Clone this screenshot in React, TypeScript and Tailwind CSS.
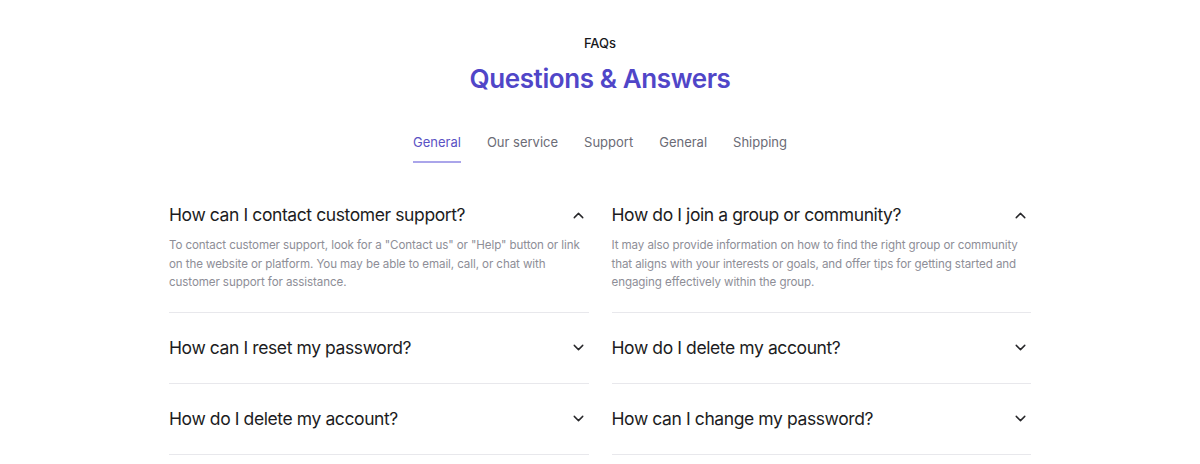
import { ChevronDown, ChevronUp } from "lucide-react";

const tabs = ["General", "Our service", "Support", "General", "Shipping"];

type Item = { q: string; a?: string };

const left: Item[] = [
  {
    q: "How can I contact customer support?",
    a: 'To contact customer support, look for a "Contact us" or "Help" button or link on the website or platform. You may be able to email, call, or chat with customer support for assistance.'
  },
  { q: "How can I reset my password?" },
  { q: "How do I delete my account?" }
];

const right: Item[] = [
  {
    q: "How do I join a group or community?",
    a: "It may also provide information on how to find the right group or community that aligns with your interests or goals, and offer tips for getting started and engaging effectively within the group."
  },
  { q: "How do I delete my account?" },
  { q: "How can I change my password?" }
];

function FaqItem({ item }: { item: Item }) {
  const open = !!item.a;
  return (
    <div className={`border-b border-[#e8e8ec] ${open ? "pb-[20px]" : "py-[23px]"}`}>
      <div className="flex items-center justify-between">
        <h3 className="text-[17.5px] leading-6 tracking-[-0.4px] text-[#1c1c22]">{item.q}</h3>
        {open ? (
          <ChevronUp className="mr-[2px] h-[17px] w-[17px] text-[#27272a]" strokeWidth={2} />
        ) : (
          <ChevronDown className="mr-[2px] h-[17px] w-[17px] text-[#27272a]" strokeWidth={2} />
        )}
      </div>
      {open ? (
        <p className="mt-[9px] text-[11.6px] leading-[18.5px] tracking-[-0.1px] text-[#8e8e97]">{item.a}</p>
      ) : null}
    </div>
  );
}

export default function App() {
  return (
    <div
      className="h-[464px] w-full overflow-hidden bg-white"
      style={{ fontFamily: "Inter, 'Noto Sans', sans-serif" }}
    >
      <div className="flex flex-col items-center pt-[35px]">
        <p className="text-[13px] font-medium leading-4 text-[#18181b]">FAQs</p>
        <h1 className="mt-[10px] text-[26px] font-semibold leading-9 tracking-[-0.4px] text-[#5046c8]">
          Questions &amp; Answers
        </h1>
        <nav className="mt-[35px] flex gap-[26px] text-[13px] leading-5">
          {tabs.map((t, i) => (
            <div
              key={t + i}
              className={`pb-[9px] ${i === 0 ? "border-b-2 border-[#aaa5ea] text-[#5a52c4]" : "border-b-2 border-transparent text-[#6b6b76]"}`}
            >
              {t}
            </div>
          ))}
        </nav>
      </div>
      <div className="mx-auto mt-[40px] grid w-[862px] grid-cols-2 gap-x-[23px]">
        <div>
          {left.map((it, i) => (
            <FaqItem key={i} item={it} />
          ))}
        </div>
        <div>
          {right.map((it, i) => (
            <FaqItem key={i} item={it} />
          ))}
        </div>
      </div>
    </div>
  );
}
